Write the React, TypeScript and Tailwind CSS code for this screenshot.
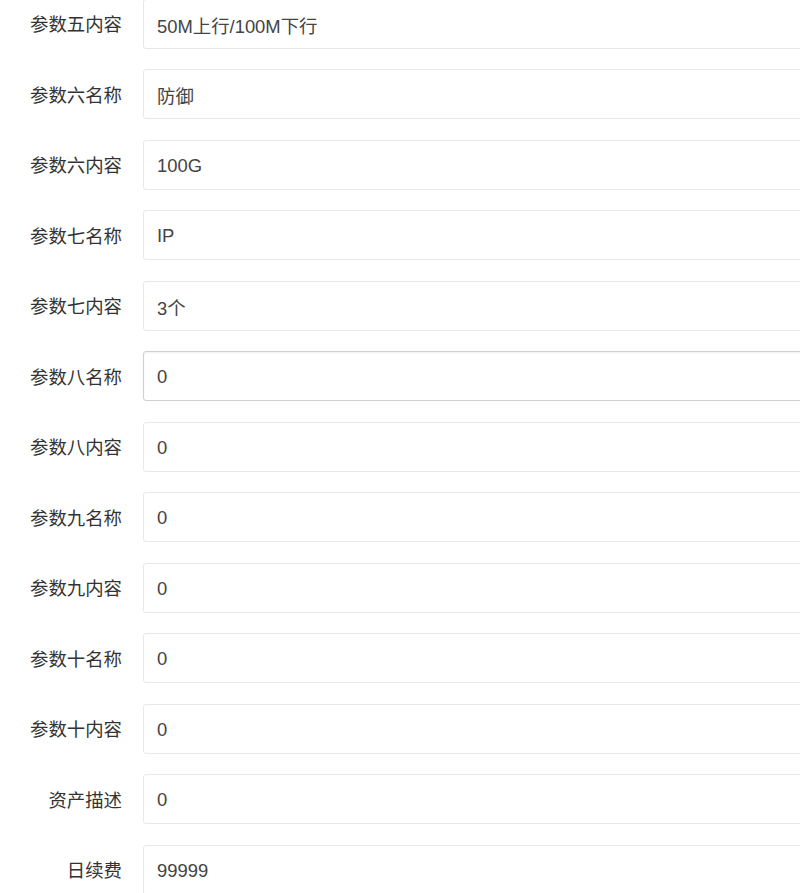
import React from "react";

const rows: { label: string; value: string; active?: boolean }[] = [
  { label: "参数五内容", value: "50M上行/100M下行" },
  { label: "参数六名称", value: "防御" },
  { label: "参数六内容", value: "100G" },
  { label: "参数七名称", value: "IP" },
  { label: "参数七内容", value: "3个" },
  { label: "参数八名称", value: "0", active: true },
  { label: "参数八内容", value: "0" },
  { label: "参数九名称", value: "0" },
  { label: "参数九内容", value: "0" },
  { label: "参数十名称", value: "0" },
  { label: "参数十内容", value: "0" },
  { label: "资产描述", value: "0" },
  { label: "日续费", value: "99999" },
];

export default function App() {
  return (
    <div
      className="w-[800px] h-[893px] overflow-hidden bg-white"
      style={{ fontFamily: '"Liberation Sans", Arial, "Noto Sans CJK SC", sans-serif' }}
    >
      <form className="flex flex-col gap-[20.5px] mt-[-1.5px]">
        {rows.map((row) => (
          <div key={row.label} className="flex items-center">
            <label className="w-[122px] shrink-0 pt-[3px] text-right text-[18.4px] text-[#333]">
              {row.label}
            </label>
            <input
              readOnly
              value={row.value}
              className={
                "ml-[21px] w-[720px] shrink-0 h-[50px] rounded-[3px] border bg-white pl-[13px] pt-[2px] text-[18.4px] text-[#444] outline-none " +
                (row.active
                  ? "border-[#cfcfcf] shadow-[inset_0_1px_2px_rgba(0,0,0,0.06)]"
                  : "border-[#e8e8e8]")
              }
            />
          </div>
        ))}
      </form>
    </div>
  );
}
